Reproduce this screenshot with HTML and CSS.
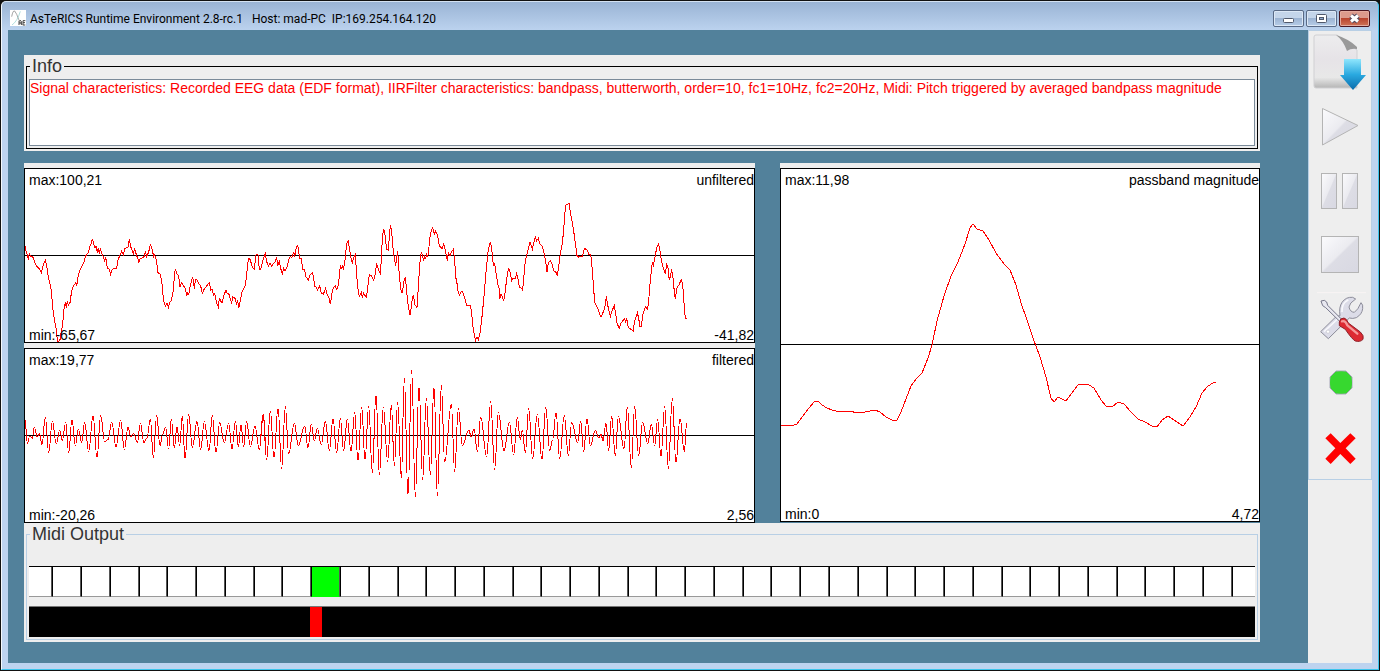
FILE: index.html
```
<!DOCTYPE html>
<html lang="en">
<head>
<meta charset="utf-8">
<title>AsTeRICS Runtime Environment</title>
<link rel="stylesheet" href="styles.css">
</head>
<body>
<div class="window">
  <div class="frame">
    <header class="titlebar">
      <svg class="app-icon" viewBox="0 0 48 48" aria-hidden="true">
        <rect width="48" height="48" fill="#fff"/>
        <path d="M5 20Q9 0 14 3Q20 10 26 28Q30 42 38 45" fill="none" stroke="#777" stroke-width="2"/>
        <path d="M6 45Q22 34 31 4" fill="none" stroke="#8cc" stroke-width="2"/>
        <path d="M27 45V34L30 31L34 34V45M27 39H34M46 32H39V45H46M39 38H45" fill="none" stroke="#444" stroke-width="3"/>
      </svg>
      <h1 class="title">AsTeRICS Runtime Environment 2.8-rc.1   Host: mad-PC  IP:169.254.164.120</h1>
      <div class="controls">
        <button class="control" type="button" aria-label="Minimize"><svg viewBox="0 0 29 15"><rect x="9.500" y="7.500" width="10" height="4" rx="1" fill="#fff" stroke="#50586b"/></svg></button>
        <button class="control" type="button" aria-label="Maximize"><svg viewBox="0 0 29 15"><rect x="9.500" y="3.500" width="10" height="8" rx="1" fill="#fff" stroke="#50586b"/><rect x="12.500" y="6.500" width="4" height="2" fill="#8fa8cc" stroke="#50586b"/></svg></button>
        <button class="control control-close" type="button" aria-label="Close"><svg viewBox="0 0 29 15"><path d="M11 4.500L18 10.500M18 4.500L11 10.500" stroke="#50465a" stroke-width="5"/><path d="M11 4.500L18 10.500M18 4.500L11 10.500" stroke="#fff" stroke-width="3"/></svg></button>
      </div>
    </header>
    <div class="content">
      <main class="desktop">
        <section class="panel info">
          <fieldset class="group group-dark">
            <legend>Info</legend>
            <textarea class="info-text" aria-label="Info" readonly>Signal characteristics: Recorded EEG data (EDF format), IIRFilter characteristics: bandpass, butterworth, order=10, fc1=10Hz, fc2=20Hz, Midi: Pitch triggered by averaged bandpass magnitude</textarea>
          </fieldset>
        </section>
        <section class="charts">
          <div class="column column-wide">
            <figure class="chart">
              <svg class="plot" viewBox="0 0 2193 525" preserveAspectRatio="none" aria-hidden="true">
                <path class="axis" d="M0 262.500H2193"/>
                <g class="trace">
                  <polyline transform="translate(-12 -24)" points="15,258 19,276 22,285 25,300 28,278 31,288 38,290 44,306 50,318 56,324 60,330 64,339 68,322 72,308 76,300 80,318 84,345 90,372 94,393 97,430 100,458 104,485 108,505 111,530 114,547 118,542 121,537 124,510 127,500 130,470 133,435 137,428 139,445 142,424 145,435 150,428 154,400 157,385 162,375 168,368 170,379 173,355 178,335 184,322 192,305 197,288 205,278 210,258 214,250 217,236 221,252 225,265 228,258 232,278 235,264 238,282 241,264 245,280 250,290 254,303 257,290 262,325 268,328 272,343 276,330 282,324 290,326 294,300 300,285 305,274 310,284 315,265 324,262 328,238 332,260 337,272 340,282 344,265 349,284 354,298 356,309 360,297 366,294 372,290 376,276 380,290 386,276 391,254 396,266 401,290 404,285 409,300 414,338 420,342 425,360 429,405 433,432 437,438 441,428 445,443 449,428 454,422 460,390 463,350 466,326 470,341 476,348 480,380 484,368 490,376 495,385 500,405 504,398 506,405 510,382 514,365 518,350 523,386 526,360 530,358 536,370 542,378 547,400 553,386 560,378 568,368 572,390 577,388 580,405 584,400 590,430 595,441 598,415 606,430 612,405 618,390 622,402 626,400 632,420 635,428 638,410 646,416 650,435 653,420 656,445 660,425 666,395 676,375 680,345 683,310 687,293 691,300 697,322 703,328 708,285 714,284 718,328 721,331"/>
                  <polyline transform="translate(708 -24)" points="1,331 5,315 10,295 16,281 20,305 25,318 30,310 35,318 40,310 44,308 50,290 53,318 58,305 62,325 67,342 71,325 75,333 82,320 86,300 90,290 96,292 101,275 104,290 108,268 113,254 117,282 120,297 124,295 128,328 134,330 138,350 145,360 150,345 157,338 160,350 165,380 169,382 173,390 179,378 184,400 190,403 197,385 202,405 207,415 211,432 216,400 220,382 226,378 230,388 235,375 239,340 241,314 244,325 247,318 250,325 254,310 258,270 261,248 265,244 269,270 273,295 277,309 281,292 286,283 289,330 293,382 298,410 304,398 307,411 311,400 315,407 319,411 323,385 328,344 334,346 341,360 346,340 350,310 355,328 361,341 364,300 367,235 371,206 375,225 380,268 385,270 388,230 391,194 395,215 399,265 403,295 407,319 410,290 413,272 416,320 420,365 423,390 427,400 431,368 436,350 440,395 445,440 450,466 454,440 457,415 460,406 465,435 471,442 475,380 479,320 482,284 485,279 491,300 494,288 497,294 500,284 503,292 507,260 510,230 514,210 518,203 523,222 527,213 533,228 538,258 546,266 551,251 557,275 562,303 565,278 570,288 575,275 580,268 584,300 587,350 592,375 595,400 599,405 602,396 608,395 613,410 620,437 631,436 635,460 639,500 643,525 647,541 651,530 655,540 660,520 665,480 671,420 676,360 680,315 685,268 691,245 695,265 700,316 704,312 709,345 713,370 717,385 719,417 722,404"/>
                  <polyline transform="translate(1428 -24)" points="1,404 4,404 8,412 11,424 15,400 19,365 23,340 26,323 30,335 35,362 40,354 45,357 50,341 55,360 58,382 64,384 68,391 72,345 76,300 80,286 85,265 90,247 93,256 97,268 101,250 106,231 110,242 115,235 120,252 127,260 132,280 137,305 141,337 145,308 151,302 157,315 162,334 169,337 172,349 176,320 181,280 187,250 191,210 194,165 198,135 207,130 210,150 215,178 220,205 226,250 231,286 236,291 247,290 253,265 262,270 267,285 272,282 277,330 281,390 285,430 293,445 298,460 303,472 308,460 314,445 319,409 323,435 331,470 337,450 343,437 347,460 351,490 358,505 363,490 370,480 374,477 377,485 380,476 385,502 395,510 400,514 403,485 412,458 416,475 420,500 424,500 428,465 436,440 443,447 447,410 452,350 457,307 460,315 466,285 471,260 475,253 479,265 484,300 488,318 493,333 496,343 500,310 504,325 508,361 512,345 515,328 519,355 523,395 526,417 530,385 537,374 544,359 548,372 552,430 556,475 560,475"/>
                </g>
              </svg>
              <figcaption class="labels"><span>max:100,21</span><span>unfiltered</span><span>min:-65,67</span><span>-41,82</span></figcaption>
            </figure>
            <figure class="chart">
              <svg class="plot" viewBox="0 0 2193 525" preserveAspectRatio="none" aria-hidden="true">
                <path class="axis" d="M0 262.500H2193"/>
                <g class="trace">
                  <path transform="translate(-12 -9)" data-extrema="15,222 22,296 29,273 37,280 43,247 52,276 58,265 66,299 76,216 86,323 97,229 109,297 119,255 127,286 137,232 146,323 156,223 166,303 175,253 185,292 194,232 206,320 219,213 231,337 242,211 254,291 264,284 275,232 288,305 302,225 313,314 324,247 332,275 341,265 352,293 361,235 372,293 381,278 391,223 400,338 410,211 420,302 428,268 437,247 446,312 454,222 463,308 471,246 479,302 487,213 495,341 506,207 517,307 531,229 542,314 553,229 567,318 577,211 588,323 599,232 613,293 626,235 636,312 646,229 655,305 663,240 671,305 680,229 691,305 705,243 718,314 730,208 740,344"/>
                  <path transform="translate(708 -9)" data-extrema="9,208 20,344 31,198 42,338 54,189 65,371 76,184 86,326 103,235 115,302 134,243 144,308 154,237 163,288 172,250 184,299 196,229 208,317 219,222 230,323 241,220 251,317 262,222 273,320 284,202 294,347 305,186 315,344 326,184 337,383 348,148 358,389 370,186 383,350 394,181 403,362 413,172 424,398 433,100 444,452 455,76 466,455 477,123 488,404 499,160 511,389 522,124 532,452 544,121 554,350 574,178 584,380 595,190 607,302 626,255 634,276 642,252 652,320 662,216 680,335 692,169 704,374 715,202 732,317"/>
                  <path transform="translate(708 -9)" data-extrema="9,208 -2,314"/>
                  <path transform="translate(1428 -9)" data-extrema="12,317 28,232 41,329 52,217 61,284 67,256 76,323 86,190 98,341 112,208 126,344 137,186 149,317 158,285 168,202 179,341 193,211 205,332 215,232 233,293 242,229 251,320 261,220 271,302 286,256 296,278 303,268 309,287 318,235 326,317 335,214 346,332 355,214 372,311 382,186 394,368 404,184 416,332 428,232 443,296 454,238 464,302 473,223 483,335 494,184 505,371 517,160 528,353 540,220 553,320 560,235"/>
                </g>
              </svg>
              <figcaption class="labels"><span>max:19,77</span><span>filtered</span><span>min:-20,26</span><span>2,56</span></figcaption>
            </figure>
          </div>
          <div class="column column-narrow">
            <figure class="chart">
              <svg class="plot" viewBox="780 168 480 354" preserveAspectRatio="none" aria-hidden="true">
                <path class="axis" d="M780 344.500H1260"/>
                <g class="trace">
                  <polyline points="781,426 787,425 791,426 797,424 803,416 809,408 814,402 818,401 822,405 827,408 832,410 840,412 850,411 857,413 865,412 875,410 880,412 886,417 892,420 897,420 901,412 906,399 911,386 916,379 922,373 928,358 932,345 937,321 944,296 951,276 958,262 965,244 970,228 973,224 977,229 983,231 989,240 996,253 1004,264 1010,270 1016,285 1021,303 1027,320 1033,338 1040,357 1046,377 1051,398 1054,402 1058,397 1062,399 1066,401 1072,393 1078,385 1084,384 1089,385 1094,388 1101,400 1106,406 1112,407 1118,402 1124,404 1131,412 1138,419 1145,422 1152,426 1157,427 1162,420 1168,416 1174,420 1183,426 1190,417 1196,407 1202,393 1208,386 1213,383 1216,382"/>
                </g>
              </svg>
              <figcaption class="labels"><span>max:11,98</span><span>passband magnitude</span><span>min:0</span><span>4,72</span></figcaption>
            </figure>
          </div>
        </section>
        <section class="panel midi">
          <fieldset class="group">
            <legend>Midi Output</legend>
            <div class="keys">
              <i></i><i></i><i></i><i></i><i></i><i></i><i></i><i></i><i></i><i></i><i class="pressed"></i><i></i><i></i><i></i><i></i><i></i><i></i><i></i><i></i><i></i><i></i><i></i><i></i><i></i><i></i><i></i><i></i><i></i><i></i><i></i><i></i><i></i><i></i><i></i><i></i><i></i><i></i><i></i><i></i><i></i><i></i><i></i><i></i>
            </div>
            <div class="pitch"><div class="pitch-mark" style="margin-left: 22.9%"></div></div>
          </fieldset>
        </section>
      </main>
      <aside class="sidebar">
        <nav class="toolbar" aria-label="Model controls">
          <button class="tool" type="button" aria-label="Deploy model">
            <svg viewBox="0 0 62 64">
              <defs>
                <linearGradient id="paper" x1="0" y1="0" x2="0" y2="1"><stop offset="0" stop-color="#ededee"/><stop offset=".45" stop-color="#e6e3e7"/><stop offset=".8" stop-color="#e8e8e8"/><stop offset="1" stop-color="#b5b5b5"/></linearGradient>
                <linearGradient id="arrow" x1="0" y1="0" x2="0" y2="1"><stop offset="0" stop-color="#8fe6fd"/><stop offset=".5" stop-color="#2aa9e0"/><stop offset="1" stop-color="#0b6cab"/></linearGradient>
                <linearGradient id="glass" x1="0" y1="0" x2="1" y2="1"><stop offset="0" stop-color="#fbfbfd"/><stop offset=".48" stop-color="#ebebf0"/><stop offset=".52" stop-color="#dddde5"/><stop offset="1" stop-color="#d8d8e2"/></linearGradient>
              </defs>
              <path d="M7 4H28L48 19V57H7Q5 57 5 55V6Q5 4 7 4Z" fill="url(#paper)" stroke="#d0d0d3"/>
              <path d="M27 4Q34 9 38 20Q42 17 48 18V16Q40 8 27 4Z" fill="#999"/>
              <path d="M35 28H52V44H57L44 59L31 44H35Z" fill="url(#arrow)"/>
            </svg>
          </button>
          <button class="tool" type="button" aria-label="Start model">
            <svg viewBox="0 0 62 64"><path d="M13.500 13.500L49 30.500L13.500 50Z" fill="url(#glass)" stroke="#b4b4b4"/></svg>
          </button>
          <button class="tool" type="button" aria-label="Pause model">
            <svg viewBox="0 0 62 64"><rect x="12.500" y="14.500" width="15" height="35" fill="url(#glass)" stroke="#b4b4b4"/><rect x="33.500" y="14.500" width="15" height="35" fill="url(#glass)" stroke="#b4b4b4"/></svg>
          </button>
          <button class="tool" type="button" aria-label="Stop model">
            <svg viewBox="0 0 62 64"><rect x="12.500" y="13.500" width="37" height="36" fill="url(#glass)" stroke="#b4b4b4"/></svg>
          </button>
          <button class="tool" type="button" aria-label="Edit options">
            <svg viewBox="27 -9 186 192">
              <path d="M51 8H198" stroke="#f8f4f4" stroke-width="3"/>
              <path d="M120 77Q116 52 126 37Q138 20 158 22L167 27Q148 39 147 51Q150 66 163 67Q174 60 183 38Q190 44 188 56Q186 73 169 83Q158 87 148 84L85 146L62 125L108 80Z" fill="#dcdce8" stroke="#8d8d9a" stroke-width="3" stroke-linejoin="round"/>
              <path d="M126 66Q124 40 145 29M72 125L116 84" fill="none" stroke="#f8f8fc" stroke-width="5"/>
              <circle cx="84" cy="125" r="5" fill="#fff" stroke="#c4c4cc" stroke-width="2"/>
              <path d="M63 33L73 31L80 36L83 46L125 88L119 94L77 53L68 47Z" fill="#e8e8f0" stroke="#77778a" stroke-width="3" stroke-linejoin="round"/>
              <path d="M118 96Q120 84 132 84Q140 86 145 99L181 126Q193 137 189 148Q181 157 166 153Q157 149 136 118L118 107Z" fill="#dd2a32" stroke="#8e2028" stroke-width="3"/>
              <path d="M126 94Q136 91 142 106L172 131" fill="none" stroke="#f59a9a" stroke-width="7" stroke-linecap="round"/>
            </svg>
          </button>
          <button class="tool" type="button" aria-label="Status">
            <svg viewBox="0 0 62 64"><path d="M27 20H37L43 26V37L37 43H27L21 37V26Z" fill="#37d82f" stroke="#a6a6b8" stroke-linejoin="round"/><circle cx="32" cy="31.500" r="11" fill="#37d82f"/></svg>
          </button>
          <button class="tool" type="button" aria-label="Exit">
            <svg viewBox="27 375 186 192"><path d="M92 430L121 459L151 430L167 445L137 475L167 506L151 522L121 492L92 522L76 506L106 475L76 445Z" fill="#f00"/></svg>
          </button>
        </nav>
      </aside>
    </div>
  </div>
</div>
<script src="traces.js"></script>
</body>
</html>
```
FILE: traces.js
```
// Draws an oscillating trace from its list of peaks and troughs,
// with a rounded turn at each of them.
document.querySelectorAll("[data-extrema]").forEach((path) => {
  const points = path.dataset.extrema.split(" ").map((pair) => pair.split(",").map(Number));
  let d = `M${points[0]}`;
  for (let i = 1; i < points.length; i++) {
    const [x0, y0] = points[i - 1];
    const [x1, y1] = points[i];
    const bend = (x1 - x0) * 0.4;
    d += `C${x0 + bend},${y0} ${x1 - bend},${y1} ${x1},${y1}`;
  }
  path.setAttribute("d", d);
});
```
FILE: styles.css
```
* { box-sizing: border-box; }

body {
  margin: 0;
  background: #111;
  color: #000;
  font-family: "Liberation Sans", Arial, sans-serif;
  font-size: 14px;
}

.window {
  display: flex;
  min-height: 100vh;
  border: 1px solid #111;
  border-radius: 6px 6px 0 0;
}

.frame {
  display: flex;
  flex: 1;
  flex-direction: column;
  min-width: 0;
  padding: 0 6px 6px;
  border: 1px solid #3cc4ec;
  border-top-color: #d4e2f2;
  border-left-color: #f4f8fc;
  border-radius: 5px 5px 0 0;
  background: #bdd3ef linear-gradient(#9ab4d5, #bbd2ee) top / 100% 28px no-repeat;
}

.titlebar {
  display: flex;
  gap: 4px;
  height: 28px;
  padding: 8px 2px 0;
}

.app-icon { width: 16px; height: 16px; }

.title {
  flex: 1;
  margin: 0;
  font: 12px/18px Roboto, "Noto Sans", sans-serif;
  white-space: pre;
}

.controls { display: flex; gap: 2px; }

.control {
  width: 31px;
  height: 17px;
  padding: 0;
  border: 1px solid #596a86;
  border-radius: 2px;
  background: linear-gradient(#c4d5ea 45%, #9cb4d3 50%, #b7cde8);
  box-shadow: inset 0 0 0 1px #dce8f6;
}

.control svg { display: block; }

.control-close {
  border-color: #4c1620;
  background: linear-gradient(#dc9a8c 45%, #b9442e 50%, #cf7458);
  box-shadow: inset 0 0 0 1px #e4ab9f;
}

.content { display: flex; flex: 1; }

.desktop {
  display: flex;
  flex: 1;
  flex-direction: column;
  min-width: 0;
  padding: 25px 48px 21px 16px;
  background: #52819b;
}

.panel { background: #eee; }

.info { padding: 1px 2px 2px; }

.group {
  min-width: 0;
  margin: 0;
  padding: 0 2px 2px;
  border: 1px solid #b8cfe5;
}

.group-dark { border-color: #000; }

.group legend {
  margin-left: 1px;
  padding: 0 2px;
  color: #333;
  font-size: 18px;
  line-height: 20px;
}

.info-text {
  display: block;
  width: 100%;
  height: 67px;
  margin-top: 3px;
  padding: 0;
  border: 1px solid #7a8a99;
  outline: 0;
  background: #fff;
  color: #f00;
  font: inherit;
  line-height: 16px;
  resize: none;
}

.charts {
  display: flex;
  flex: 1;
  gap: 25px;
  margin-top: 12px;
}

.column {
  display: flex;
  flex-direction: column;
  gap: 5px;
  min-width: 0;
  padding: 5px 0 0;
  background: #eee;
}

.column-wide { flex: 731 1 0; }

.column-narrow {
  flex: 480 1 0;
  border-bottom: 1px solid #52819b;
}

.chart {
  position: relative;
  display: flex;
  flex: 1;
  min-height: 175px;
  margin: 0;
  border: 1px solid #000;
  background: #fff;
}

.plot {
  position: absolute;
  top: -1px;
  left: -1px;
  width: calc(100% + 2px);
  height: calc(100% + 2px);
}

.axis,
.trace > * {
  fill: none;
  stroke: #000;
  stroke-width: 1px;
  vector-effect: non-scaling-stroke;
  shape-rendering: crispEdges;
}

.trace > * { stroke: #f00; }

.labels {
  position: relative;
  display: grid;
  flex: 1;
  grid-template-columns: auto auto;
  align-content: space-between;
  justify-content: space-between;
  padding: 4px 0 0 4px;
  line-height: 14px;
}

.labels span:nth-child(even) { text-align: right; }

.midi { padding: 1px 2px 2px; }

.keys {
  display: flex;
  height: 31px;
  margin-top: 22px;
  border-top: 1px solid #000;
}

.keys i {
  flex: 6 1 0;
  border-right: 1px solid #555;
  border-bottom: 1px solid #999;
  border-left: 1px solid #000;
  background: #fff;
}

.keys i:first-child { flex-grow: 5; border-left: 0; }

.keys i:last-child { flex-grow: 5; border-right: 0; }

.keys .pressed { border-bottom-color: #0f0; background: #0f0; }

.pitch {
  height: 31px;
  margin-top: 9px;
  border-top: 1px solid #777;
  background: #000;
}

.pitch-mark {
  width: 12px;
  height: 30px;
  background: #f00;
}

.sidebar { background: #eee; }

.toolbar {
  display: flex;
  flex-direction: column;
  border: 1px solid #b8cfe5;
}

.tool {
  width: 62px;
  height: 64px;
  padding: 0;
  border: 0;
  background: none;
}

.tool svg { display: block; width: 62px; height: 64px; }
```
